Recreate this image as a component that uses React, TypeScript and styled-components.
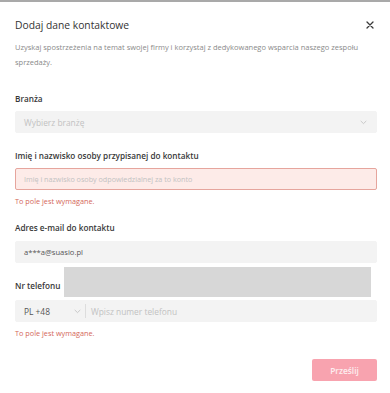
import * as React from 'react';
import styled, { createGlobalStyle } from 'styled-components';

const Global = createGlobalStyle`
  html, body {
    margin: 0;
    padding: 0;
    background: #ffffff;
  }
  body {
    font-family: 'Open Sans', 'Noto Sans', sans-serif;
    -webkit-font-smoothing: antialiased;
  }
`;

const Modal = styled.div`
  position: relative;
  width: 390px;
  height: 393px;
  box-sizing: border-box;
  border-top: 2px solid #a9a9a9;
  padding: 15px 13px 0 15px;
  background: #ffffff;
`;

const Header = styled.div`
  display: flex;
  justify-content: space-between;
  align-items: center;
  height: 16px;
`;

const Title = styled.h2`
  margin: 0;
  font-size: 10.3px;
  font-weight: 400;
  color: #333333;
  line-height: 16px;
`;

const Close = styled.button`
  border: none;
  background: none;
  padding: 0;
  margin-right: 2px;
  width: 10px;
  height: 10px;
  display: flex;
  align-items: center;
  justify-content: center;
  cursor: pointer;
`;

const Description = styled.p`
  margin: 7px 0 0;
  font-size: 7.5px;
  line-height: 15px;
  color: #8a8a8a;
  padding-right: 14px;
`;

const Field = styled.div<{ $top: number }>`
  margin-top: ${p => p.$top}px;
`;

const Label = styled.div`
  font-size: 8.2px;
  font-weight: 600;
  color: #383838;
  line-height: 12px;
`;

const InputBox = styled.div<{ $error?: boolean; $gap?: number }>`
  margin-top: ${p => p.$gap ?? 6}px;
  height: 22px;
  box-sizing: border-box;
  display: flex;
  align-items: center;
  padding: 0 9px 0 8px;
  border-radius: 2px;
  background: ${p => (p.$error ? '#fdebe8' : '#f3f3f3')};
  border: 1px solid ${p => (p.$error ? '#e6a59d' : '#f3f3f3')};
`;

const Placeholder = styled.span<{ $size?: number }>`
  flex: 1;
  color: #c2c2c2;
  font-size: ${p => p.$size ?? 8.4}px;
`;

const Value = styled.span`
  flex: 1;
  color: #555555;
  font-size: 7.6px;
`;

const Country = styled.div`
  display: flex;
  align-items: center;
  width: 57px;
  color: #555555;
  font-size: 8.4px;
  height: 100%;
`;

const CountryCode = styled.span`
  flex: 1;
`;

const Divider = styled.div`
  width: 1px;
  height: 14px;
  background: #dddddd;
  margin: 0 5px 0 4px;
`;

const ErrorText = styled.div`
  margin-top: 6px;
  font-size: 7.3px;
  line-height: 10px;
  color: #d4675a;
`;

const Footer = styled.div`
  display: flex;
  justify-content: flex-end;
  margin-top: 21px;
`;

const Submit = styled.button`
  width: 65px;
  height: 22px;
  border: none;
  border-radius: 2px;
  background: #f8a3af;
  color: #fdeef0;
  font-family: inherit;
  font-size: 8.4px;
  font-weight: 600;
  padding: 0;
`;

const Redaction = styled.div`
  position: absolute;
  left: 64px;
  top: 265px;
  width: 307px;
  height: 30px;
  background: #d7d7d7;
`;

const Chevron = () => (
  <svg width="7" height="5" viewBox="0 0 7 5" fill="none">
    <path d="M1 1.2L3.5 3.6L6 1.2" stroke="#c4c4c4" strokeWidth="0.9" strokeLinecap="round" strokeLinejoin="round" />
  </svg>
);

const CloseIcon = () => (
  <svg width="8" height="8" viewBox="0 0 8 8" fill="none">
    <path d="M1 1L7 7M7 1L1 7" stroke="#3a3a3a" strokeWidth="1.3" strokeLinecap="round" />
  </svg>
);

export default function App() {
  return (
    <>
      <Global />
      <Modal>
        <Header>
          <Title>Dodaj dane kontaktowe</Title>
          <Close aria-label="Zamknij"><CloseIcon /></Close>
        </Header>
        <Description>
          Uzyskaj spostrzeżenia na temat swojej firmy i korzystaj z dedykowanego wsparcia naszego zespołu sprzedaży.
        </Description>

        <Field $top={23}>
          <Label>Branża</Label>
          <InputBox>
            <Placeholder>Wybierz branżę</Placeholder>
            <Chevron />
          </InputBox>
        </Field>

        <Field $top={17}>
          <Label>Imię i nazwisko osoby przypisanej do kontaktu</Label>
          <InputBox $error>
            <Placeholder $size={7.2}>Imię i nazwisko osoby odpowiedzialnej za to konto</Placeholder>
          </InputBox>
          <ErrorText>To pole jest wymagane.</ErrorText>
        </Field>

        <Field $top={16}>
          <Label>Adres e-mail do kontaktu</Label>
          <InputBox $gap={7}>
            <Value>a***a@suasio.pl</Value>
          </InputBox>
        </Field>

        <Field $top={17}>
          <Label>Nr telefonu</Label>
          <InputBox $gap={8}>
            <Country>
              <CountryCode>PL +48</CountryCode>
              <Chevron />
            </Country>
            <Divider />
            <Placeholder>Wpisz numer telefonu</Placeholder>
          </InputBox>
          <ErrorText>To pole jest wymagane.</ErrorText>
        </Field>

        <Footer>
          <Submit>Prześlij</Submit>
        </Footer>

        <Redaction />
      </Modal>
    </>
  );
}
